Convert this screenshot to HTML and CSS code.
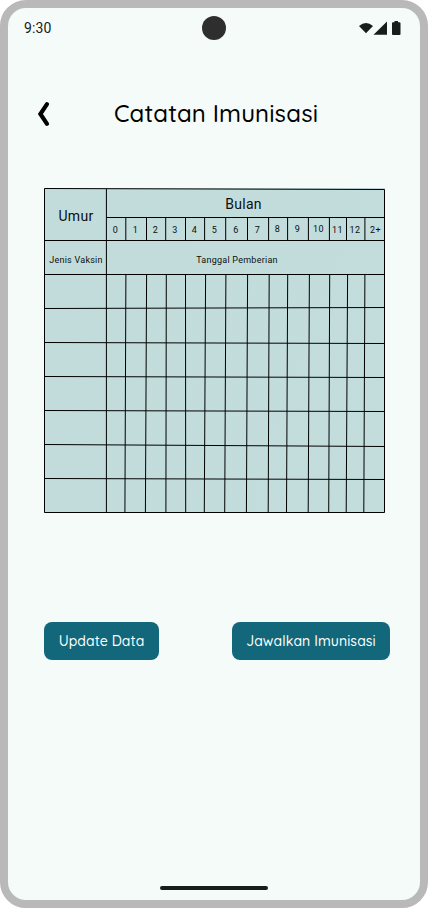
FILE: index.html
```html
<!DOCTYPE html>
<html lang="id">
<head>
<meta charset="utf-8">
<title>Catatan Imunisasi</title>
<link rel="stylesheet" href="styles.css">
</head>
<body>
<div class="phone">
  <header class="status">
    <span class="time">9:30</span>
    <span class="camera"></span>
    <svg class="status-icons" width="46" height="18" viewBox="0 0 46 18">
      <path d="M0 6Q7 .2 14 6L7 13.200Z"/>
      <path d="M14.500 14.800H28V1.500Z"/>
      <path d="M35.500 1h3.500v1.200h1.500q1 0 1 1v10.800q0 1-1 1h-6.500q-1 0-1-1v-10.800q0-1 1-1h1.500z"/>
    </svg>
  </header>
  <div class="title-bar">
    <svg class="back" width="14" height="26" viewBox="0 0 14 26"><path d="M11 3.200L4.400 13L11 22.800"/></svg>
    <h1>Catatan Imunisasi</h1>
  </div>
  <main>
    <section class="chart">
      <svg class="lines" width="342" height="326" viewBox="44 188 342 326">
        <path d="M44.500 188.500L384.500 189.500V512.500H44.500Z"/>
        <path d="M106.500 217.500H384.500M44.500 240.500H384.500M44.500 274.500H384.500"/>
        <path d="M44.500 308.500L384.500 307.500M44.500 342.500L384.500 343.500M44.500 376.500L384.500 377.500M44.500 410.500L384.500 411.500M44.500 444.500L384.500 446.500M44.500 478.500L384.500 479.500"/>
        <path d="M106.400 189V512.500"/>
        <path d="M125.800 217.500V240.500M146.500 217.500V240.500M165.700 217.500V240.500M185.500 217.500V240.500M204.600 217.500V240.500M225.700 217.500V240.500M247.500 217.500V240.500M268.600 217.500V240.500M287.600 217.500V240.500M308.400 217.500V240.500M329.400 217.500V240.500M346.500 217.500V240.500M364.900 217.500V240.500"/>
        <path d="M125.900 274.500L124.900 512.500M146.600 274.500L145.400 512.500M166.300 274.500L165.900 512.500M185.500 274.500L185.700 512.500M205.600 274.500L204.300 512.500M225.900 274.500L224.700 512.500M247.600 274.500L246.400 512.500M269.200 274.500L268.200 512.500M287.700 274.500L286.500 512.500M309.400 274.500L308.200 512.500M329.700 274.500L328.700 512.500M347.600 274.500L346.200 512.500M364.900 274.500L363.800 512.500"/>
      </svg>
      <div class="age">Umur</div>
      <div class="month">Bulan</div>
      <div class="months">
        <span>0</span><span>1</span><span>2</span><span>3</span><span>4</span><span>5</span><span>6</span><span>7</span><span class="raised">8</span><span class="raised">9</span><span class="raised">10</span><span>11</span><span>12</span><span class="last">2+</span>
      </div>
      <div class="vaccine">Jenis Vaksin</div>
      <div class="dates">Tanggal Pemberian</div>
    </section>
    <div class="actions">
      <button class="update">Update Data</button>
      <button class="schedule">Jawalkan Imunisasi</button>
    </div>
  </main>
  <div class="home"></div>
</div>
</body>
</html>
```
FILE: styles.css
```css
* { box-sizing: border-box; }
body { margin: 0; background: #fff; font-family: Roboto, sans-serif; }
.phone {
  width: 428px; height: 908px;
  border: 8px solid #b9b9b9; border-radius: 26px;
  background: #f5fbf9;
  display: flex; flex-direction: column;
}
.status {
  height: 40px; padding: 0 16px;
  display: grid; grid-template-columns: 1fr 24px 1fr; align-items: center;
  color: #171d1b;
}
.time { font-size: 14px; letter-spacing: .14px; }
.camera { width: 24px; height: 24px; border-radius: 50%; background: #2e2e2e; }
.status-icons { justify-self: end; margin-right: -1px; margin-top: 1px; fill: #171d1b; }
.title-bar { height: 60px; margin-top: 36px; padding-left: 28px; display: flex; align-items: center; }
.back { flex: none; fill: none; stroke: #000; stroke-width: 4.2; stroke-linecap: round; stroke-linejoin: miter; }
h1, button {
  font-family: Quicksand, Inter, sans-serif;
  font-weight: 540;
  white-space: nowrap;
}
h1 { margin: -2px 0 0 64px; font-size: 24px; line-height: 30px; letter-spacing: .12px; color: #000; }
.chart {
  position: relative;
  width: 341px; height: 325px; margin: 44px 0 0 36px;
  display: grid;
  grid-template-columns: 62px 279px;
  grid-template-rows: 29px 23px 34px 1fr;
  background: linear-gradient(110deg, #c2dcdc, #c2dddb);
  color: #0c0f0e;
}
.lines { position: absolute; left: 0; top: 0; fill: none; stroke: #000; stroke-width: 1; }
.age, .month, .vaccine, .dates { display: flex; align-items: center; justify-content: center; white-space: nowrap; }
.age { grid-row: 1 / 3; font-size: 14px; letter-spacing: .3px; padding: 3px 0 0 2px; }
.month { font-size: 14px; letter-spacing: .3px; padding: 3px 4px 0 0; }
.months {
  grid-column: 2;
  display: grid; align-items: center; justify-items: center;
  grid-template-columns: 19px 21px 19px 20px 19px 21px 22px 21px 19px 21px 21px 17px 18px 21px;
  padding-top: 2px;
  font-size: 9px; letter-spacing: .4px;
}
.raised { margin-top: -2px; }
.last { padding-left: 2px; }
.vaccine, .dates { font-size: 9px; padding-top: 6px; letter-spacing: .25px; }
.vaccine { padding-left: 2px; }
.dates { padding-right: 17px; }
.actions { display: flex; justify-content: space-between; margin: 109px 30px 0 36px; }
button { height: 38px; padding: 0; border: 0; border-radius: 8px; background: #12687a; color: #fff; font-size: 14px; letter-spacing: .07px; }
.update { width: 115px; }
.schedule { width: 158px; }
.home { width: 108px; height: 4px; margin: auto auto 10px; border-radius: 2px; background: #171d1b; }
```
